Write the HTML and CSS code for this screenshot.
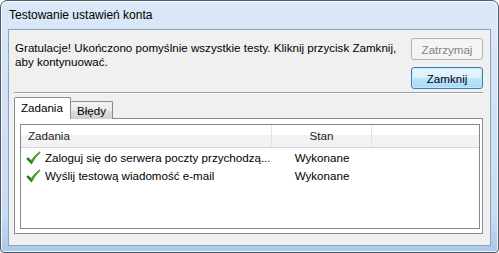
FILE: index.html
```html
<!DOCTYPE html>
<html lang="pl">

<head>
    <meta charset="UTF-8">
    <title>Testowanie ustawień konta</title>
    <link rel="stylesheet" href="styles.css">
</head>

<body>
    <div class="window">
        <div class="titlebar">Testowanie ustawień konta</div>

        <div class="client">
            <div class="top-row">
                <p class="message">Gratulacje! Ukończono pomyślnie wszystkie testy. Kliknij przycisk Zamknij, aby kontynuować.</p>
                <div class="buttons">
                    <button class="btn" disabled>Zatrzymaj</button>
                    <button class="btn btn-default">Zamknij</button>
                </div>
            </div>

            <div class="separator"></div>

            <div class="tabs">
                <div class="tab tab-active">Zadania</div>
                <div class="tab">Błędy</div>
            </div>

            <div class="tab-panel">
                <div class="list">
                    <div class="list-header">
                        <div class="col col-task">Zadania</div>
                        <div class="col col-state">Stan</div>
                        <div class="col col-rest"></div>
                    </div>
                    <div class="list-row">
                        <div class="col col-task">
                            <svg class="check" viewBox="0 0 16 16">
                                <path d="M1.2 8.8 L3.2 7.3 L6.1 10.2 Q9.5 5.2 14.6 1.4 L15.4 2.4 Q10.2 7.2 6.6 14.4 Z" fill="#1f7a19" />
                                <path d="M6.1 10.2 Q9.5 5.2 14.6 1.4 L15.4 2.4 Q10.4 6.8 6.5 12.6 Z" fill="#4fae35" />
                            </svg>
                            <span class="cell-text">Zaloguj się do serwera poczty przychodzą...</span>
                        </div>
                        <div class="col col-state">Wykonane</div>
                        <div class="col col-rest"></div>
                    </div>
                    <div class="list-row">
                        <div class="col col-task">
                            <svg class="check" viewBox="0 0 16 16">
                                <path d="M1.2 8.8 L3.2 7.3 L6.1 10.2 Q9.5 5.2 14.6 1.4 L15.4 2.4 Q10.2 7.2 6.6 14.4 Z" fill="#1f7a19" />
                                <path d="M6.1 10.2 Q9.5 5.2 14.6 1.4 L15.4 2.4 Q10.4 6.8 6.5 12.6 Z" fill="#4fae35" />
                            </svg>
                            <span class="cell-text">Wyślij testową wiadomość e-mail</span>
                        </div>
                        <div class="col col-state">Wykonane</div>
                        <div class="col col-rest"></div>
                    </div>
                </div>
            </div>
        </div>
    </div>
</body>

</html>
```

FILE: styles.css
```css
html,
body {
    margin: 0;
    padding: 0;
    width: 499px;
    height: 253px;
    overflow: hidden;
    background: #ffffff;
    font-family: 'Liberation Sans', Arial, sans-serif;
    font-size: 11.6px;
}

/* window frame */
.window {
    box-sizing: border-box;
    width: 499px;
    height: 253px;
    display: flex;
    flex-direction: column;
    border: 1px solid #4f5b69;
    border-radius: 7px 7px 4px 4px;
    padding: 0 7px 6px 7px;
    background: linear-gradient(#dbe8f7, #d3e3f5 30%, #c8dcf2 85%, #a9c8ea);
    box-shadow: inset 0 0 0 1px rgba(255, 255, 255, 0.75);
}

.titlebar {
    height: 28px;
    line-height: 29px;
    padding-left: 1px;
    color: #000;
    font-size: 12px;
}

/* client area */
.client {
    flex: 1;
    display: flex;
    flex-direction: column;
    background: #f0f0f0;
    border: 1px solid #8ea2bb;
    padding: 8px 7px 11px 5px;
}

.top-row {
    display: flex;
    justify-content: space-between;
}

.message {
    margin: 3px 0 0 1px;
    width: 390px;
    line-height: 14px;
    color: #000;
}

.buttons {
    display: flex;
    flex-direction: column;
    gap: 7px;
}

.btn {
    box-sizing: border-box;
    width: 72px;
    height: 22px;
    padding: 0;
    font-family: inherit;
    font-size: 11.6px;
    color: #000;
    border: 1px solid #707070;
    border-radius: 3px;
    background: linear-gradient(#f2f2f2, #ebebeb 50%, #dddddd 51%, #cfcfcf);
}

.btn:disabled {
    color: #838383;
    border-color: #adb2b5;
    background: #f4f4f4;
}

.btn-default {
    border-color: #3c7fb1;
    background: linear-gradient(#eaf6fd, #d9f0fc 50%, #bee6fd 51%, #a7d9f5);
    box-shadow: inset 0 0 0 1px #c4e6f9;
}

.separator {
    margin-top: 3px;
    height: 1px;
    background: #a0a0a0;
    border-bottom: 1px solid #ffffff;
}

/* tabs */
.tabs {
    display: flex;
    align-items: flex-end;
    margin-top: 3px;
    height: 22px;
    position: relative;
    z-index: 1;
    margin-bottom: -1px;
}

.tab {
    box-sizing: border-box;
    height: 18px;
    padding: 0 6px;
    line-height: 17px;
    border: 1px solid #898c95;
    border-bottom: none;
    border-left: none;
    border-radius: 2px 2px 0 0;
    background: linear-gradient(#f3f3f3, #ebebeb 50%, #dddddd 51%, #cfcfcf);
    color: #000;
}

.tab-active {
    height: 22px;
    width: 57px;
    padding: 0 0 0 6px;
    line-height: 20px;
    border-left: 1px solid #898c95;
    background: #ffffff;
}

.tab-panel {
    flex: 1;
    display: flex;
    background: #ffffff;
    border: 1px solid #898c95;
    padding: 5px 2px 4px 5px;
}

/* list view */
.list {
    flex: 1;
    border: 1px solid #828790;
    background: #ffffff;
}

.list-header {
    display: flex;
    height: 22px;
    border-bottom: 1px solid #d5d5d5;
    background: linear-gradient(#ffffff 45%, #f1f2f4 46%, #f1f2f4);
    color: #1c1c1c;
}

.list-header .col {
    line-height: 22px;
}

.list-header .col-task,
.list-header .col-state {
    border-right: 1px solid #e3e4e6;
}

.col {
    box-sizing: border-box;
    white-space: nowrap;
    overflow: hidden;
}

.col-task {
    width: 251px;
    padding-left: 7px;
    display: flex;
    align-items: center;
}

.col-state {
    width: 100px;
    text-align: center;
}

.col-rest {
    flex: 1;
}

.list-row {
    display: flex;
    height: 18px;
    line-height: 18px;
    color: #000;
}

.list-header + .list-row {
    margin-top: 1px;
}

.list-row .col-task {
    padding-left: 4px;
}

.check {
    width: 16px;
    height: 16px;
    flex: none;
    margin-right: 4px;
}

.cell-text {
    overflow: hidden;
    text-overflow: ellipsis;
}
```
